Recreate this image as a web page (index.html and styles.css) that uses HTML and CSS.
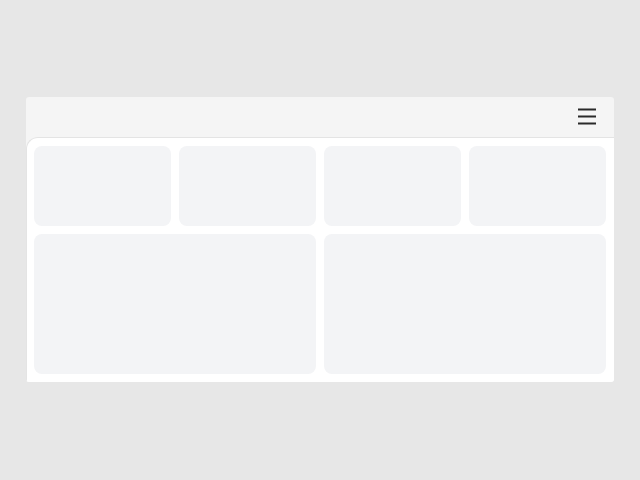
FILE: index.html
```html
<!DOCTYPE html>
<html>
<head>
<meta charset="utf-8">
<link rel="stylesheet" href="styles.css">
</head>
<body>
<div class="stage">
  <div class="app">
    <header class="topbar">
      <button class="menu-btn" aria-label="Menu">
        <svg width="18" height="16" viewBox="0 0 18 16">
          <path d="M0 1.5h18M0 8.5h18M0 15.5h18" stroke="#2a2a2a" stroke-width="2.2" fill="none" transform="translate(0,-1)"/>
        </svg>
      </button>
    </header>
    <main class="content">
      <div class="grid">
        <div class="card stat"></div>
        <div class="card stat"></div>
        <div class="card stat"></div>
        <div class="card stat"></div>
        <div class="card wide"></div>
        <div class="card wide"></div>
      </div>
    </main>
  </div>
</div>
</body>
</html>
```
FILE: styles.css
```css
html, body {
  margin: 0;
  padding: 0;
}
body {
  background: #e7e7e7;
  font-family: "Liberation Sans", Arial, sans-serif;
}
.stage {
  width: 640px;
  height: 480px;
  display: flex;
  justify-content: center;
  padding-top: 97px;
  box-sizing: border-box;
}
.app {
  width: 588px;
  height: 285px;
  background: #f5f5f5;
  border-radius: 3px;
  overflow: hidden;
  display: flex;
  flex-direction: column;
}
.topbar {
  height: 40px;
  flex: none;
  display: flex;
  align-items: center;
  justify-content: flex-end;
  padding-right: 18px;
}
.menu-btn {
  border: 0;
  background: none;
  padding: 0;
  width: 18px;
  height: 16px;
  display: block;
}
.menu-btn svg {
  display: block;
  overflow: visible;
}
.content {
  flex: 1;
  background: #ffffff;
  border-top: 1px solid #e4e4e4;
  border-left: 1px solid #e4e4e4;
  border-top-left-radius: 12px;
  padding: 8px 8px 8px 7px;
}
.grid {
  display: grid;
  grid-template-columns: repeat(4, 1fr);
  grid-template-rows: 80px 140px;
  gap: 8px;
}
.card {
  background: #f3f4f6;
  border-radius: 8px;
}
.wide {
  grid-column: span 2;
}
```
